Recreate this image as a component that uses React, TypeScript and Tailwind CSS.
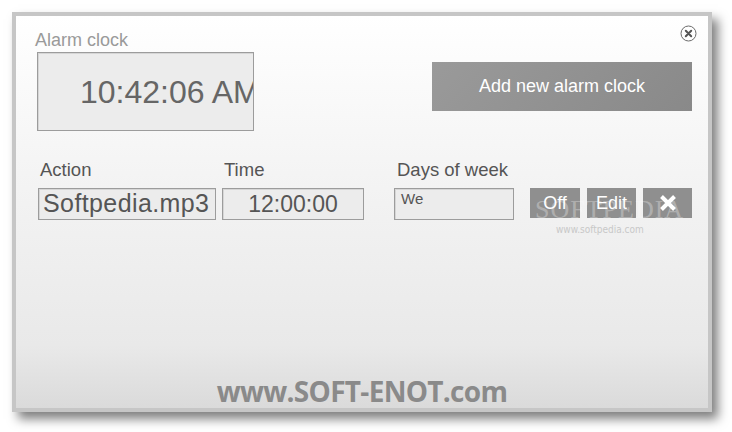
import React from 'react';

const CloseIcon: React.FC = () => (
  <svg width="17" height="17" viewBox="0 0 17 17">
    <circle cx="8.5" cy="8.5" r="7.5" fill="white" stroke="#6b6b6b" strokeWidth="1" />
    <path d="M5.8 5.8 L11.2 11.2 M11.2 5.8 L5.8 11.2" stroke="#555" strokeWidth="2" strokeLinecap="round" />
  </svg>
);

const Field: React.FC<{ label: string; width: string; children: React.ReactNode; labelPad?: string }> = ({
  label,
  width,
  children,
  labelPad = 'pl-[2px]',
}) => (
  <div className={`flex flex-col ${width}`}>
    <div className={`h-[20px] whitespace-nowrap text-[18.5px] leading-[20px] text-[#555] ${labelPad}`}>{label}</div>
    <div className="mt-[8px]">{children}</div>
  </div>
);

const App: React.FC = () => {
  return (
    <div className="w-[732px] h-[432px] bg-white font-['Liberation_Sans',Arial,sans-serif] pt-[12px] pl-[12px]">
      {/* Window frame */}
      <div className="w-[700px] h-[400px] border-4 border-[#c6c6c6] shadow-[6px_7px_10px_rgba(0,0,0,0.5)]">
        <div className="relative flex h-full flex-col bg-[linear-gradient(to_bottom,#ffffff_0%,#f4f4f4_40%,#e9e9e9_84%,#dadada_100%)]">
          <div className="absolute right-[11px] top-[9px]">
            <CloseIcon />
          </div>

          {/* Top row */}
          <div className="flex items-start justify-between pr-[16px]">
            <div className="ml-[19px] mt-[14px] flex flex-col">
              <div className="h-[20px] text-[18px] leading-[20px] text-[#9a9a9a]">Alarm clock</div>
              <div className="ml-[2px] mt-[2px] flex h-[79px] w-[217px] items-center overflow-hidden whitespace-nowrap border border-[#9c9c9c] bg-[#ececec] pl-[42px] text-[32px] text-[#666] shadow-[inset_1px_1px_0_#d6d6d6]">
                10:42:06 AM
              </div>
            </div>
            <button className="mt-[46px] flex h-[49px] w-[260px] items-center justify-center bg-[linear-gradient(135deg,#9a9a9a,#898989)] text-[18px] text-white">
              Add new alarm clock
            </button>
          </div>

          {/* Alarm row */}
          <div className="relative mt-[29px] flex items-start pl-[22px]">
            <Field label="Action" width="w-[178px]">
              <div className="flex h-[32px] items-center overflow-hidden whitespace-nowrap border border-[#9c9c9c] bg-[#ececec] pl-[4px] text-[25px] tracking-[0.4px] text-[#555] shadow-[inset_1px_1px_0_#d6d6d6]">
                Softpedia.mp3
              </div>
            </Field>
            <Field label="Time" width="ml-[6px] w-[142px]">
              <div className="flex h-[32px] items-center justify-center border border-[#9c9c9c] bg-[#ececec] text-[23px] text-[#555] shadow-[inset_1px_1px_0_#d6d6d6]">
                12:00:00
              </div>
            </Field>
            <Field label="Days of week" width="ml-[30px] w-[120px]" labelPad="pl-[3px]">
              <div className="h-[32px] border border-[#9c9c9c] bg-[#ececec] pl-[6px] pt-[1px] text-[15px] leading-[18px] text-[#555] shadow-[inset_1px_1px_0_#d6d6d6]">
                We
              </div>
            </Field>
            <div className="ml-[16px] mt-[28px] flex gap-[7px] text-[18px] text-white">
              <button className="flex h-[30px] w-[50px] items-center justify-center bg-[#8f8f8f]">Off</button>
              <button className="flex h-[30px] w-[49px] items-center justify-center bg-[#8f8f8f]">Edit</button>
              <button className="flex h-[30px] w-[49px] items-center justify-center bg-[#8f8f8f]">
                <svg width="18" height="18" viewBox="0 0 18 18">
                  <path d="M2.5 2.5 L15.5 15.5 M15.5 2.5 L2.5 15.5" stroke="white" strokeWidth="4" />
                </svg>
              </button>
            </div>
            {/* watermark overlay */}
            <div className="pointer-events-none absolute left-[519px] top-[30px] font-['Liberation_Serif',serif] text-[26px] tracking-[1px] text-white/30">
              SOFTPEDIA
            </div>
            <div className="pointer-events-none absolute left-[540px] top-[62px] font-['DejaVu_Sans_Condensed','DejaVu_Sans',sans-serif] text-[10px] text-[#c8c8c8]">
              www.softpedia.com
            </div>
          </div>

          {/* Footer brand */}
          <div className="mt-auto pb-[3px] text-center font-['Open_Sans',sans-serif] text-[28px] font-bold leading-[28px] tracking-[-0.7px] text-[#8a8a8a]">
            www.SOFT-ENOT.com
          </div>
        </div>
      </div>
    </div>
  );
};

export default App;
